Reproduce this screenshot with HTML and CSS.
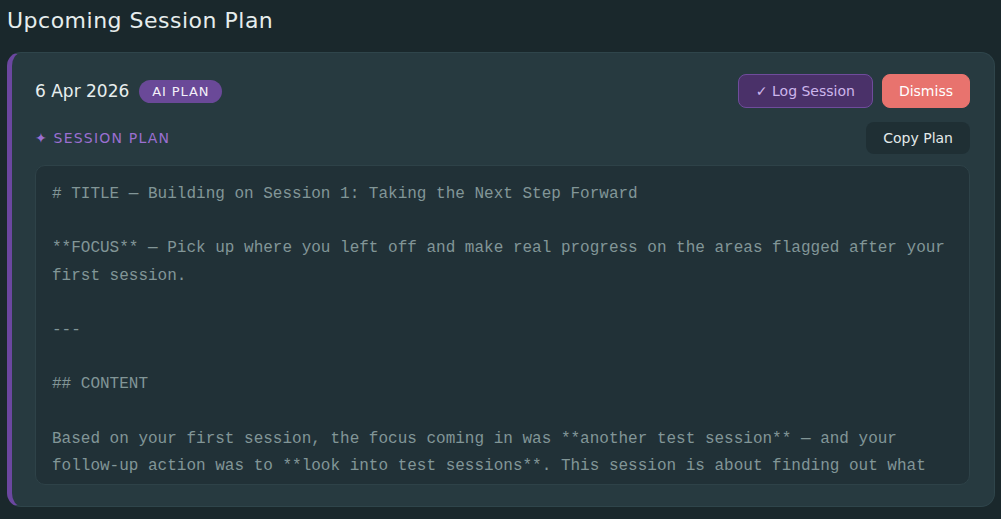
FILE: index.html
```html
<!DOCTYPE html>
<html lang="en">
<head>
<meta charset="utf-8">
<title>Upcoming Session Plan</title>
<link rel="stylesheet" href="styles.css">
</head>
<body>
  <h1 class="page-title">Upcoming Session Plan</h1>
  <section class="card">
    <div class="card-head">
      <div class="meta">
        <span class="date">6 Apr 2026</span>
        <span class="badge">AI PLAN</span>
      </div>
      <div class="actions">
        <button class="btn btn-log">✓ Log Session</button>
        <button class="btn btn-dismiss">Dismiss</button>
      </div>
    </div>
    <div class="plan-head">
      <span class="plan-label">✦ SESSION PLAN</span>
      <button class="btn btn-copy">Copy Plan</button>
    </div>
    <div class="plan-box">
<pre class="plan-text"># TITLE — Building on Session 1: Taking the Next Step Forward

**FOCUS** — Pick up where you left off and make real progress on the areas flagged after your first session.

---

## CONTENT

Based on your first session, the focus coming in was **another test session** — and your follow-up action was to **look into test sessions**. This session is about finding out what</pre>
    </div>
  </section>
</body>
</html>
```
FILE: styles.css
```css
* { box-sizing: border-box; }
html, body { margin: 0; padding: 0; }
body {
  background: #1a282c;
  font-family: "DejaVu Sans", "Open Sans", sans-serif;
  color: #e3eaea;
  padding: 0 6px 0 7px;
  height: 519px;
  overflow: hidden;
}
.page-title {
  margin: 0;
  font-size: 22px;
  font-weight: 400;
  letter-spacing: 0.5px;
  line-height: 42px;
  color: #e6eded;
}
.card {
  margin-top: 10px;
  background: #273a40;
  border: 1px solid #2f454b;
  border-left: 5px solid #6b47a0;
  border-radius: 14px;
  padding: 21px 24px 21px 23px;
}
.card-head {
  display: flex;
  justify-content: space-between;
  align-items: center;
}
.meta { display: flex; align-items: center; gap: 10px; }
.date { font-size: 17px; color: #e8eeee; }
.badge {
  background: #6a4998;
  color: #f4f0f9;
  font-size: 13px;
  font-weight: 400;
  letter-spacing: 0.9px;
  padding: 3px 13px;
  border-radius: 12px;
  line-height: 17px;
}
.actions { display: flex; gap: 9px; }
.btn {
  font-family: inherit;
  font-size: 14px;
  border-radius: 8px;
  cursor: pointer;
  line-height: 18px;
}
.btn-log {
  background: #4a3169;
  border: 1px solid #6f4c9c;
  color: #cdb6ec;
  height: 34px;
  padding: 0 17px;
}
.btn-dismiss {
  background: #e8736e;
  border: 1px solid #e8736e;
  color: #ffffff;
  height: 34px;
  padding: 0 16px;
}
.plan-head {
  display: flex;
  justify-content: space-between;
  align-items: center;
  margin-top: 14px;
}
.plan-label {
  color: #9b6fd1;
  font-size: 14px;
  letter-spacing: 1.2px;
}
.btn-copy {
  background: #1f2f34;
  border: none;
  color: #e4eaea;
  height: 32px;
  padding: 0 17px;
}
.plan-box {
  margin-top: 11px;
  background: #213137;
  border: 1px solid #2e4248;
  border-radius: 10px;
  height: 320px;
  overflow: hidden;
  padding: 15px 16px;
}
.plan-text {
  margin: 0;
  font-family: "Liberation Mono", "Courier New", monospace;
  font-size: 16px;
  line-height: 1.7;
  color: #829697;
  white-space: pre-wrap;
}
```
